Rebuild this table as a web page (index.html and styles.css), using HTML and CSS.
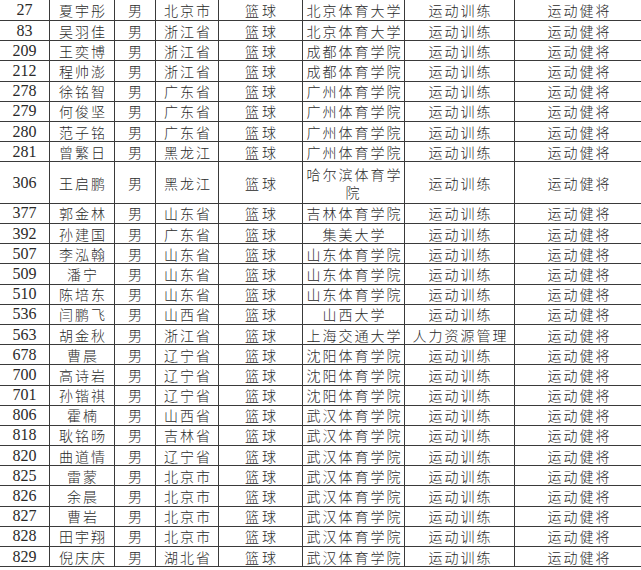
FILE: index.html
```html
<!DOCTYPE html>
<html lang="zh-CN">
<head>
<meta charset="utf-8">
<title>名单</title>
<link rel="stylesheet" href="styles.css">
</head>
<body>
<div class="sheet">
<table class="roster">
<colgroup>
<col class="c-no"><col class="c-name"><col class="c-sex"><col class="c-prov"><col class="c-sport"><col class="c-school"><col class="c-major"><col class="c-title">
</colgroup>
<tbody>
<tr><td class="no">27</td><td>夏宇彤</td><td>男</td><td>北京市</td><td class="sp">篮球</td><td>北京体育大学</td><td>运动训练</td><td>运动健将</td></tr>
<tr><td class="no">83</td><td>吴羽佳</td><td>男</td><td>浙江省</td><td class="sp">篮球</td><td>北京体育大学</td><td>运动训练</td><td>运动健将</td></tr>
<tr><td class="no">209</td><td>王奕博</td><td>男</td><td>浙江省</td><td class="sp">篮球</td><td>成都体育学院</td><td>运动训练</td><td>运动健将</td></tr>
<tr><td class="no">212</td><td>程帅澎</td><td>男</td><td>浙江省</td><td class="sp">篮球</td><td>成都体育学院</td><td>运动训练</td><td>运动健将</td></tr>
<tr><td class="no">278</td><td>徐铭智</td><td>男</td><td>广东省</td><td class="sp">篮球</td><td>广州体育学院</td><td>运动训练</td><td>运动健将</td></tr>
<tr><td class="no">279</td><td>何俊坚</td><td>男</td><td>广东省</td><td class="sp">篮球</td><td>广州体育学院</td><td>运动训练</td><td>运动健将</td></tr>
<tr><td class="no">280</td><td>范子铭</td><td>男</td><td>广东省</td><td class="sp">篮球</td><td>广州体育学院</td><td>运动训练</td><td>运动健将</td></tr>
<tr><td class="no">281</td><td>曾繁日</td><td>男</td><td>黑龙江</td><td class="sp">篮球</td><td>广州体育学院</td><td>运动训练</td><td>运动健将</td></tr>
<tr class="tall"><td class="no">306</td><td>王启鹏</td><td>男</td><td>黑龙江</td><td class="sp">篮球</td><td>哈尔滨体育学院</td><td>运动训练</td><td>运动健将</td></tr>
<tr><td class="no">377</td><td>郭金林</td><td>男</td><td>山东省</td><td class="sp">篮球</td><td>吉林体育学院</td><td>运动训练</td><td>运动健将</td></tr>
<tr><td class="no">392</td><td>孙建国</td><td>男</td><td>广东省</td><td class="sp">篮球</td><td>集美大学</td><td>运动训练</td><td>运动健将</td></tr>
<tr><td class="no">507</td><td>李泓翰</td><td>男</td><td>山东省</td><td class="sp">篮球</td><td>山东体育学院</td><td>运动训练</td><td>运动健将</td></tr>
<tr><td class="no">509</td><td>潘宁</td><td>男</td><td>山东省</td><td class="sp">篮球</td><td>山东体育学院</td><td>运动训练</td><td>运动健将</td></tr>
<tr><td class="no">510</td><td>陈培东</td><td>男</td><td>山东省</td><td class="sp">篮球</td><td>山东体育学院</td><td>运动训练</td><td>运动健将</td></tr>
<tr><td class="no">536</td><td>闫鹏飞</td><td>男</td><td>山西省</td><td class="sp">篮球</td><td>山西大学</td><td>运动训练</td><td>运动健将</td></tr>
<tr><td class="no">563</td><td>胡金秋</td><td>男</td><td>浙江省</td><td class="sp">篮球</td><td>上海交通大学</td><td>人力资源管理</td><td>运动健将</td></tr>
<tr><td class="no">678</td><td>曹晨</td><td>男</td><td>辽宁省</td><td class="sp">篮球</td><td>沈阳体育学院</td><td>运动训练</td><td>运动健将</td></tr>
<tr><td class="no">700</td><td>高诗岩</td><td>男</td><td>辽宁省</td><td class="sp">篮球</td><td>沈阳体育学院</td><td>运动训练</td><td>运动健将</td></tr>
<tr><td class="no">701</td><td>孙锴祺</td><td>男</td><td>辽宁省</td><td class="sp">篮球</td><td>沈阳体育学院</td><td>运动训练</td><td>运动健将</td></tr>
<tr><td class="no">806</td><td>霍楠</td><td>男</td><td>山西省</td><td class="sp">篮球</td><td>武汉体育学院</td><td>运动训练</td><td>运动健将</td></tr>
<tr><td class="no">818</td><td>耿铭旸</td><td>男</td><td>吉林省</td><td class="sp">篮球</td><td>武汉体育学院</td><td>运动训练</td><td>运动健将</td></tr>
<tr><td class="no">820</td><td>曲道情</td><td>男</td><td>辽宁省</td><td class="sp">篮球</td><td>武汉体育学院</td><td>运动训练</td><td>运动健将</td></tr>
<tr><td class="no">825</td><td>雷蒙</td><td>男</td><td>北京市</td><td class="sp">篮球</td><td>武汉体育学院</td><td>运动训练</td><td>运动健将</td></tr>
<tr><td class="no">826</td><td>余晨</td><td>男</td><td>北京市</td><td class="sp">篮球</td><td>武汉体育学院</td><td>运动训练</td><td>运动健将</td></tr>
<tr><td class="no">827</td><td>曹岩</td><td>男</td><td>北京市</td><td class="sp">篮球</td><td>武汉体育学院</td><td>运动训练</td><td>运动健将</td></tr>
<tr><td class="no">828</td><td>田宇翔</td><td>男</td><td>北京市</td><td class="sp">篮球</td><td>武汉体育学院</td><td>运动训练</td><td>运动健将</td></tr>
<tr><td class="no">829</td><td>倪庆庆</td><td>男</td><td>湖北省</td><td class="sp">篮球</td><td>武汉体育学院</td><td>运动训练</td><td>运动健将</td></tr>
</tbody>
</table>
</div>
</body>
</html>
```
FILE: styles.css
```css
html, body {
  margin: 0;
  padding: 0;
  background: #ffffff;
}

.sheet {
  width: 641px;
  height: 570px;
  overflow: hidden;
}

.roster {
  border-collapse: collapse;
  table-layout: fixed;
  width: 643px;
  margin: -1px 0 0 -1px;
  font-family: "Noto Sans CJK SC", sans-serif;
  font-size: 14px;
  font-weight: 300;
  color: #2a2a2a;
}

.c-no { width: 50px; }
.c-name { width: 65px; }
.c-sex { width: 41px; }
.c-prov { width: 63px; }
.c-sport { width: 84px; }
.c-school { width: 102px; }
.c-major { width: 110px; }
.c-title { width: 128px; }

.roster td {
  border: 1px solid #3a3a3a;
  padding: 0 1px;
  height: 19.2px;
  line-height: 18px;
  text-align: center;
  vertical-align: middle;
  letter-spacing: 2px;
  text-indent: 2px;
  white-space: normal;
  word-break: break-all;
}

.roster tr:first-child td {
  height: 20px;
}

.roster tr.tall td {
  height: 40.5px;
}

.roster td.no {
  font-family: "Liberation Serif", serif;
  font-size: 16px;
  font-weight: 400;
  letter-spacing: 0;
  text-indent: 0;
}

.roster td.sp {
  letter-spacing: 3px;
  text-indent: 3px;
}
```
